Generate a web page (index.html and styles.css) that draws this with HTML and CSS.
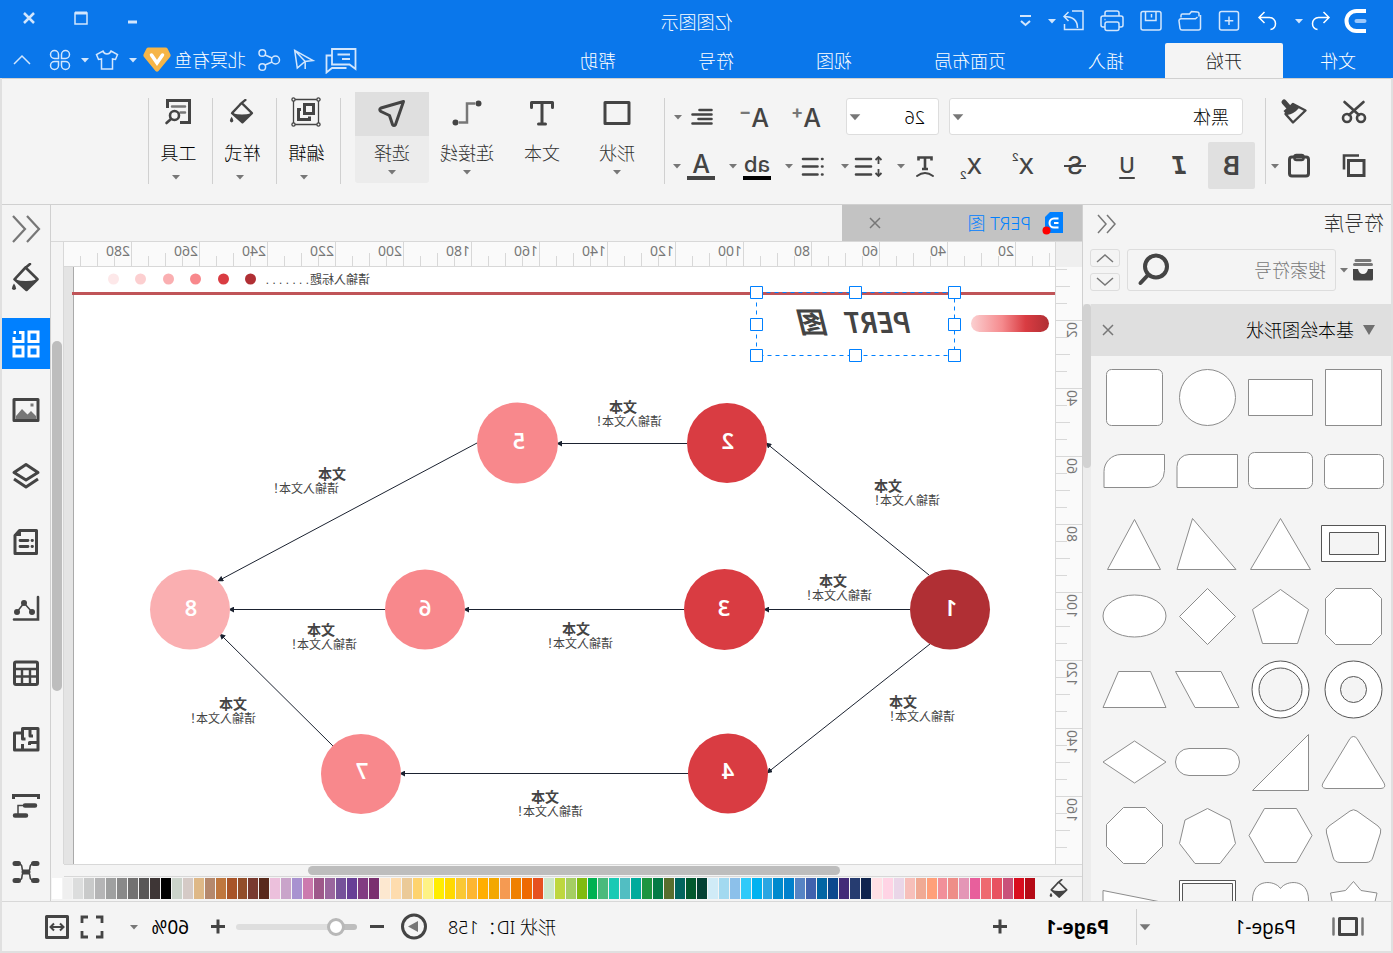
FILE: index.html
```html
<!DOCTYPE html>
<html lang="zh-CN">
<head>
<meta charset="utf-8">
<title>亿图图示</title>
<link rel="stylesheet" href="styles.css">
</head>
<body>
<svg class="defs" aria-hidden="true">
  <symbol id="caret" viewBox="0 0 12 12"><path d="M2 4h8L6 8.500z" fill="currentColor"/></symbol>
  <symbol id="bucket" viewBox="0 0 30 30"><path d="M11 1l6 5M15.500 4.500L3.500 16.300 14.500 27 26.500 16.300z" fill="none" stroke="currentColor" stroke-width="2.600" stroke-linejoin="round" stroke-linecap="round"/><path d="M4 16.500q11 3 22 0L14.500 27z" fill="currentColor"/><path d="M27 20.500q4 6 0 6.500-4-.5 0-6.500z" fill="currentColor"/></symbol>
  <symbol id="arrowL" viewBox="0 0 24 24"><path d="M8.500 3L3 8.500 8.500 14M3 8.500h10.500a6 6 0 0 1 6 6c0 3.500-2 5.500-5 6" fill="none" stroke="currentColor" stroke-width="1.500"/></symbol>
  <symbol id="x" viewBox="0 0 16 16"><path d="M3 3l10 10M13 3L3 13" fill="none" stroke="currentColor" stroke-width="1.500"/></symbol>
  <marker id="tip" viewBox="0 0 8 8" refX="7" refY="4" markerWidth="6" markerHeight="6" markerUnits="userSpaceOnUse" orient="auto"><path d="M0 0l8 4-8 4z" fill="#1b2230"/></marker>
</svg>

<div class="app">
  <header class="top">
    <div class="title-row">
      <div class="quick">
        <svg class="logo" viewBox="0 0 28 28"><path d="M3 4h9.500a10 10 0 0 1 0 20H3" fill="none" stroke="#fff" stroke-width="4"/><path d="M4.500 14h8" stroke="#9cc8fb" stroke-width="4" stroke-linecap="round"/></svg>
        <button class="hbtn with-caret" aria-label="撤销"><svg class="i24"><use href="#arrowL"/></svg><svg class="caret"><use href="#caret"/></svg></button>
        <button class="hbtn" aria-label="重做"><svg class="i24 flip"><use href="#arrowL"/></svg></button>
        <button class="hbtn" aria-label="新建"><svg class="i24" viewBox="0 0 24 24"><rect x="2.500" y="2.500" width="19" height="18.500" rx="2"/><path d="M12 7.500v8.500M7.700 11.800h8.600"/></svg></button>
        <button class="hbtn" aria-label="打开"><svg class="i24" viewBox="0 0 24 24"><path d="M3 7.500V4.500a1.500 1.500 0 0 1 1.500-1.500l6-.5 2 2.500h7a1.500 1.500 0 0 1 1.500 1.500v2"/><path d="M1.500 6v13a2 2 0 0 0 2 2H20a2 2 0 0 0 2-1.700l1-7.300a2 2 0 0 0-2-2.300H6.500L4.500 8"/></svg></button>
        <button class="hbtn" aria-label="保存"><svg class="i24" viewBox="0 0 24 24"><rect x="2" y="2.500" width="20" height="18.500" rx="2"/><path d="M7 2.500v9h10.500v-9M11.500 5v3.500"/></svg></button>
        <button class="hbtn" aria-label="打印"><svg class="i24" viewBox="0 0 24 24"><path d="M5 7V4a2 2 0 0 1 2-2h10a2 2 0 0 1 2 2v3M5 18H3a2 2 0 0 1-2-2V9a2 2 0 0 1 2-2h18a2 2 0 0 1 2 2v7a2 2 0 0 1-2 2h-2M18.500 10.500h1"/><rect x="5" y="13" width="14" height="8.500" rx="2"/></svg></button>
        <button class="hbtn with-caret" aria-label="导出"><svg class="i24" viewBox="0 0 24 24"><path d="M13 2H2v18.500h18.500V15M7.500 19C7.500 12 12 7.500 21 7.500M16.500 3L21 7.500 16.500 12"/></svg><svg class="caret"><use href="#caret"/></svg></button>
        <button class="hbtn more" aria-label="更多"><svg class="i24" viewBox="0 0 24 24"><path d="M7 7h11M8 12l4.500 4 4.500-4" stroke-width="2"/></svg></button>
      </div>
      <h1>亿图图示</h1>
      <div class="winctl">
        <button aria-label="最小化"><svg class="i16" viewBox="0 0 16 16"><path d="M4 12h9" stroke-width="3"/></svg></button>
        <button aria-label="最大化"><svg class="i16" viewBox="0 0 16 16"><path d="M2 3h12v11H2z" stroke-width="1.500"/><path d="M2 3h12" stroke-width="3"/></svg></button>
        <button aria-label="关闭"><svg class="i16" viewBox="0 0 16 16"><path d="M3 3l10 10M13 3L3 13" stroke-width="2.500"/></svg></button>
      </div>
    </div>
    <div class="menu-row">
      <nav class="menu">
        <button class="file">文件</button><button class="on">开始</button><button>插入</button><button>页面布局</button><button>视图</button><button>符号</button><button>帮助</button>
      </nav>
      <div class="account">
        <button class="chat" aria-label="评论"><svg class="i32" viewBox="0 0 32 28"><path d="M1.500 23V3H25v15.500H7.500zM7 8.500h12.500M7 13h8M25 9.500h5.500v17L25 22H10.500" stroke-width="1.800"/></svg></button>
        <button aria-label="发送"><svg class="i24" viewBox="0 0 24 24"><path d="M21.300 2.300L3 12.500l8 1 7.700 6.500zM21.300 2.300L10.800 13.500V21"/></svg></button>
        <button aria-label="分享"><svg class="i24" viewBox="0 0 24 24"><circle cx="18.700" cy="5" r="3.300"/><circle cx="18.700" cy="19" r="3.300"/><circle cx="5.500" cy="12" r="4"/><path d="M9 10l7-3M9 14l7 3"/></svg></button>
        <button class="user">北冥有鱼</button>
        <button class="with-caret vip" aria-label="会员"><svg class="i28" viewBox="0 0 28 28"><path d="M5.500 1.500h17q1.500 0 2 1l3 6q.5 1.500-.5 2.500L15.500 25q-1.500 1.500-3 0L1 11Q0 10 .5 8.500l3-6q.5-1 2-1z" fill="#f6b548" stroke="none"/><path d="M8.500 9l5.500 8 5.500-8" stroke="#fff" stroke-width="3.500" stroke-linecap="round"/></svg><svg class="caret"><use href="#caret"/></svg></button>
        <button class="with-caret skin" aria-label="皮肤"><svg class="i24" viewBox="0 0 24 24"><path d="M8 3L1.500 6.500l2 5L6.500 11v10h11V11l3 .5 2-5L16 3q-1 3-4 3T8 3z"/></svg><svg class="caret"><use href="#caret"/></svg></button>
        <button aria-label="应用"><svg class="i24" viewBox="0 0 24 24"><path d="M10.500 10.500H6.500a4 4 0 1 1 4-4zM13.500 10.500v-4a4 4 0 1 1 4 4zM10.500 13.500v4a4 4 0 1 1-4-4zM13.500 13.500h4a4 4 0 1 1-4 4z"/></svg></button>
        <button class="fold" aria-label="收起"><svg class="i24" viewBox="0 0 24 24"><path d="M4 16l8-8 8 8"/></svg></button>
      </div>
    </div>
  </header>

  <section class="ribbon">
    <div class="clip">
      <div class="r1">
        <button class="ib" aria-label="剪切"><svg viewBox="0 0 30 30"><circle cx="8" cy="20" r="4"/><circle cx="22" cy="20" r="4"/><path d="M5.500 4L20 17M24.500 4L10 17" stroke-linecap="round"/></svg></button>
        <button class="ib" aria-label="格式刷"><svg viewBox="0 0 30 30"><path d="M25 4l-4 4.500" stroke-width="5" stroke-linecap="round"/><path d="M16 6L3.500 12.500 16 24.500 23.500 16z" stroke-linejoin="round" stroke-width="2.400"/><path d="M16.500 5l9 8-3.500 4q-7-1-12-7z" fill="#444" stroke="none"/></svg></button>
      </div>
      <div class="r2">
        <button class="ib" aria-label="复制"><svg viewBox="0 0 30 30"><path d="M5 9.500h15.500v15H5z" stroke-width="3"/><path d="M25 18.500V4.500H10"/></svg></button>
        <button class="ib" aria-label="粘贴"><svg viewBox="0 0 30 30"><rect x="5.500" y="6" width="19" height="19" rx="2.500" stroke-width="3"/><rect x="10.500" y="4" width="9" height="5" rx="2"/></svg></button>
        <svg class="caret"><use href="#caret"/></svg>
      </div>
    </div>
    <div class="rule"></div>
    <div class="font">
      <div class="r1">
        <label class="sel wide"><select aria-label="字体"><option>黑体</option></select><svg class="caret"><use href="#caret"/></svg></label>
        <label class="sel"><select aria-label="字号"><option>26</option></select><svg class="caret"><use href="#caret"/></svg></label>
        <button class="ib tx size">A<sup>+</sup></button>
        <button class="ib tx size">A<sup>−</sup></button>
        <span class="split"><button class="ib" aria-label="对齐"><svg viewBox="0 0 30 30"><path d="M5.500 8h12M5.500 12.500h19M5.500 17h13M5.500 21.500h19" stroke-linecap="round"/></svg></button><svg class="caret"><use href="#caret"/></svg></span>
      </div>
      <div class="r2">
        <button class="ib tx bold">B</button>
        <button class="ib tx ital">I</button>
        <button class="ib tx und">U</button>
        <button class="ib tx strike">S</button>
        <button class="ib tx xx">X<sup>2</sup></button>
        <button class="ib tx xx">X<sub>2</sub></button>
        <span class="split tsplit"><button class="ib" aria-label="文字效果"><svg viewBox="0 0 30 30"><path d="M8.500 9.500V6.500h13v3M15 6.500V18M12 18h6"/><path d="M7 25q8-6 16 0" stroke-linecap="round" stroke-width="2"/></svg></button><svg class="caret"><use href="#caret"/></svg></span>
        <span class="split"><button class="ib" aria-label="行距"><svg viewBox="0 0 30 30"><path d="M13 8h15M13 15.500h15M13 23.500h15" stroke-linecap="round"/><path d="M5.500 13V6.500M2.500 9l3-3 3 3M5.500 18v6.500M2.500 22l3 3 3-3" stroke-width="1.800"/></svg></button><svg class="caret"><use href="#caret"/></svg></span>
        <span class="split"><button class="ib" aria-label="列表"><svg viewBox="0 0 30 30"><path d="M10.500 8H25M10.500 15.500H25M10.500 23.500H25M5.500 8h.5M5.500 15.500h.5M5.500 23.500h.5" stroke-linecap="round"/></svg></button><svg class="caret"><use href="#caret"/></svg></span>
        <span class="split"><button class="ib tx ab">ab</button><svg class="caret"><use href="#caret"/></svg></span>
        <span class="split"><button class="ib tx acol">A</button><svg class="caret"><use href="#caret"/></svg></span>
      </div>
    </div>
    <div class="rule"></div>
    <div class="bigs">
      <button class="big"><span class="pic"><svg viewBox="0 0 30 30"><path d="M3 3.500h24v21H3z" stroke-width="3" stroke-linejoin="round"/></svg></span><span class="lab">形状</span><svg class="caret"><use href="#caret"/></svg></button>
      <button class="big"><span class="pic"><svg viewBox="0 0 30 30"><path d="M4.500 8.500V3.500h21v5M15 3.500v21M11.500 25h7" stroke-width="3" stroke-linecap="round" stroke-linejoin="round"/></svg></span><span class="lab">文本</span></button>
      <button class="big"><span class="pic"><svg viewBox="0 0 30 30"><path d="M7 4.500h8v19h8" stroke="#777" stroke-width="2.500"/><circle cx="3.500" cy="4.500" r="3" fill="#444" stroke="none"/><circle cx="26.500" cy="23.500" r="3" fill="#444" stroke="none"/></svg></span><span class="lab">连接线</span><svg class="caret"><use href="#caret"/></svg></button>
      <button class="big on"><span class="pic"><svg viewBox="0 0 30 30"><path d="M3.500 2.500L26 9q2.500 1.500 0 3.500l-8.500 4-3 9q-1.500 2-3 0z" stroke-width="3" stroke-linejoin="round"/></svg></span><span class="lab">选择</span><svg class="caret"><use href="#caret"/></svg></button>
    </div>
    <div class="rule"></div>
    <button class="grp"><span class="pic"><svg viewBox="0 0 30 30"><path d="M2.500 2.500h25v25h-25z" stroke-width="1.300"/><g fill="#f4f4f4" stroke-width="1.300"><circle cx="2.500" cy="2.500" r="1.600"/><circle cx="27.500" cy="2.500" r="1.600"/><circle cx="2.500" cy="27.500" r="1.600"/><circle cx="27.500" cy="27.500" r="1.600"/></g><path d="M7.500 7.500h9v9h-9zM20 12.500h2.500v10H11.500V19.500" stroke-width="3"/></svg></span><span class="lab">编辑</span><svg class="caret"><use href="#caret"/></svg></button>
    <div class="rule"></div>
    <button class="grp"><span class="pic small"><svg><use href="#bucket"/></svg></span><span class="lab">样式</span><svg class="caret"><use href="#caret"/></svg></button>
    <div class="rule"></div>
    <button class="grp"><span class="pic"><svg viewBox="0 0 30 30"><path d="M25.500 11V3.500H3.500v22H13" stroke-width="3"/><path d="M8 9.500h13M8 15.500h4.500" stroke="#777" stroke-linecap="round" stroke-width="2.500"/><circle cx="18.500" cy="18.500" r="4.500"/><path d="M22 22l4.500 4" stroke-linecap="round"/></svg></span><span class="lab">工具</span><svg class="caret"><use href="#caret"/></svg></button>
    <div class="rule"></div>
  </section>

  <main class="work">
    <aside class="lib">
      <div class="lib-head"><h2>符号库</h2><button aria-label="收起符号库"><svg class="i24" viewBox="0 0 24 24"><path d="M12 3l-8 9 8 9M21 3l-8 9 8 9"/></svg></button></div>
      <div class="search">
        <button class="libbtn" aria-label="符号库菜单"><svg class="i24" viewBox="0 0 24 24"><path d="M5 2.500h14M3.500 6.500h17" stroke="#777" stroke-width="3" stroke-linecap="round"/><path d="M2 11h5q1 5 5 5t5-5h5v10a1.500 1.500 0 0 1-1.500 1.500h-17A1.500 1.500 0 0 1 2 21z" fill="#444" stroke="none"/></svg><svg class="caret"><use href="#caret"/></svg></button>
        <label class="sbox"><input type="text" placeholder="搜索符号" aria-label="搜索符号"><svg viewBox="0 0 36 36"><circle cx="16" cy="14.500" r="11" /><path d="M24 23l7.500 8" stroke-linecap="round"/></svg></label>
        <div class="updown"><button aria-label="上一个"><svg viewBox="0 0 20 12"><path d="M2 10l8-7 8 7"/></svg></button><button aria-label="下一个"><svg viewBox="0 0 20 12"><path d="M2 2l8 7 8-7"/></svg></button></div>
      </div>
      <div class="lib-body">
        <div class="lib-list">
          <div class="cat"><svg viewBox="0 0 12 10"><path d="M0 0h12L6 10z" fill="#707070"/></svg><span>基本绘图形状</span><button aria-label="关闭分类"><svg class="i16"><use href="#x"/></svg></button></div>
          <div class="shapes">
            <svg viewBox="0 0 73 73"><path d="M8.500 8.500h56v56h-56z"/></svg>
            <svg viewBox="0 0 73 73"><path d="M4.500 18.500h64v36h-64z"/></svg>
            <svg viewBox="0 0 73 73"><circle cx="36.500" cy="36.500" r="28"/></svg>
            <svg viewBox="0 0 73 73"><rect x="8.500" y="8.500" width="56" height="56" rx="5"/></svg>
            <svg viewBox="0 0 73 73"><rect x="6.500" y="20.500" width="59" height="34" rx="5"/></svg>
            <svg viewBox="0 0 73 73"><rect x="4.500" y="18.500" width="64" height="36" rx="6"/></svg>
            <svg viewBox="0 0 73 73"><path d="M6.500 20.500H55a12 12 0 0 1 12 12V53.500H6.500z"/></svg>
            <svg viewBox="0 0 73 73"><path d="M6.500 20.500H50a17 17 0 0 1 17 17V53.500H23a17 17 0 0 1-16.500-17z"/></svg>
            <svg viewBox="0 0 73 73" class="dk"><path d="M4.500 18.500h64v36h-64z"/><path class="in" d="M11.500 25.500h49v22h-49z"/></svg>
            <svg viewBox="0 0 73 73"><path d="M36.500 11.500l30 51h-60z"/></svg>
            <svg viewBox="0 0 73 73"><path d="M51.500 11.500L67 62.500H8z"/></svg>
            <svg viewBox="0 0 73 73"><path d="M36.500 12.500L63.500 62.500H10.500z"/></svg>
            <svg viewBox="0 0 73 73"><path d="M18.500 8.500h36l10 10v36l-10 10h-36l-10-10v-36z"/></svg>
            <svg viewBox="0 0 73 73"><path d="M36.500 9.500l28 20-10 34h-35l-11-34z"/></svg>
            <svg viewBox="0 0 73 73"><path d="M36.500 8.500l28 28-28 28-28-28z"/></svg>
            <svg viewBox="0 0 73 73"><ellipse cx="36.500" cy="36" rx="31.500" ry="21"/></svg>
            <svg viewBox="0 0 73 73" class="dk"><circle cx="36.500" cy="36.500" r="28.500"/><circle class="in" cx="36.500" cy="36.500" r="13"/></svg>
            <svg viewBox="0 0 73 73" class="dk"><circle cx="36.500" cy="36.500" r="28.500"/><circle class="in" cx="36.500" cy="36.500" r="21.500"/></svg>
            <svg viewBox="0 0 73 73"><path d="M23 18.500h45.500l-19.500 36H5z"/></svg>
            <svg viewBox="0 0 73 73"><path d="M20.500 18.500h32l15.500 36H5z"/></svg>
            <svg viewBox="0 0 73 73"><path d="M33 12.500q3.500-4 7 0L67 57q2.500 5-3 5.500H9q-5.500-.5-3-5.500z"/></svg>
            <svg viewBox="0 0 73 73"><path d="M8.500 8.500v56h56z"/></svg>
            <svg viewBox="0 0 73 73"><rect x="4.500" y="22.500" width="64" height="27" rx="13.500"/></svg>
            <svg viewBox="0 0 73 73"><path d="M36.500 15l31.500 21-31.500 21L5 36z"/></svg>
            <svg viewBox="0 0 73 73"><path d="M33 12q3.500-2.500 7 0L61 27q4 3 2.500 7L57 58q-1.500 5.500-7 5.500H24q-5.500 0-7-5.500L9.500 34Q8 30 12 27z"/></svg>
            <svg viewBox="0 0 73 73"><path d="M20.500 9.500h32l15.500 27-15.500 27h-32L5 36.500z"/></svg>
            <svg viewBox="0 0 73 73"><path d="M36.500 9.500L59 21l5.500 23.500-15.500 20H24l-15.500-20L14 21z"/></svg>
            <svg viewBox="0 0 73 73"><path d="M25.500 8.500h22l17 17v22l-17 17h-22l-17-17v-22z"/></svg>
            <svg viewBox="0 0 73 73"><path d="M36.500 9.500l8 9 15 2.500-2.500 13 4 14-16 4-8.500 12-8.500-12-16-4 4-14-3-13 16-2.500z"/></svg>
            <svg viewBox="0 0 73 73"><path d="M36.500 16.500C42 8 64.500 6 64.500 28c0 16-20 27-28 36-8-9-28-20-28-36 0-22 22.500-20 28-11.500z"/></svg>
            <svg viewBox="0 0 73 73" class="dk"><path d="M8.500 8.500h56v56h-56z"/><path class="in" d="M11.500 11.500h50v50h-50z"/></svg>
            <svg viewBox="0 0 73 73"><path d="M68 18.500v36L5 44V31z"/></svg>
          </div>
        </div>
        <div class="vbar lite"><i></i></div>
      </div>
    </aside>

    <section class="center">
      <div class="tabs"><div class="tab"><svg class="i24" viewBox="0 0 24 24"><path d="M3 1h13l5 5v16H3z" fill="#0080ff"/><path d="M7.500 7.500H12a4.500 4.500 0 0 1 0 9H7.500M7.500 12H12" fill="none" stroke="#fff" stroke-width="2"/><circle cx="19.500" cy="19.500" r="4" fill="#f00"/></svg><a href="#pert">PERT 图</a><button aria-label="关闭"><svg class="i16"><use href="#x"/></svg></button></div></div>
      <div class="corner"></div>
      <svg class="hruler">
        <defs><pattern id="ht" x="39" y="0" width="68" height="26" patternUnits="userSpaceOnUse"><path d="M.5 0v26M17.500 14v12M34.500 11v15M51.500 14v12" stroke="#d8d8d8"/></pattern></defs>
        <rect width="100%" height="26" fill="url(#ht)"/>
        <g><text x="41" y="14">20</text><text x="109" y="14">40</text><text x="177" y="14">60</text><text x="245" y="14">80</text><text x="313" y="14">100</text><text x="381" y="14">120</text><text x="449" y="14">140</text><text x="517" y="14">160</text><text x="585" y="14">180</text><text x="653" y="14">200</text><text x="721" y="14">220</text><text x="789" y="14">240</text><text x="857" y="14">260</text><text x="925" y="14">280</text></g>
      </svg>
      <svg class="vruler">
        <defs><pattern id="vt" x="0" y="53" width="26" height="68" patternUnits="userSpaceOnUse"><path d="M0 .5h26M15 17.500h11M12 34.500h14M15 51.500h11" stroke="#d8d8d8"/></pattern></defs>
        <rect width="26" height="100%" fill="url(#vt)"/>
        <g text-anchor="end"><text transform="translate(15 55) rotate(-90)">20</text><text transform="translate(15 123) rotate(-90)">40</text><text transform="translate(15 191) rotate(-90)">60</text><text transform="translate(15 259) rotate(-90)">80</text><text transform="translate(15 327) rotate(-90)">100</text><text transform="translate(15 395) rotate(-90)">120</text><text transform="translate(15 463) rotate(-90)">140</text><text transform="translate(15 531) rotate(-90)">160</text></g>
      </svg>
      <div class="canvas" id="pert">
        <svg class="page" width="991" height="597" viewBox="338 267 991 597">
          <defs><linearGradient id="pill"><stop offset="0" stop-color="#b02f34"/><stop offset=".3" stop-color="#d93c42"/><stop offset=".6" stop-color="#f58a8d"/><stop offset="1" stop-color="#fbd0d1"/></linearGradient></defs>
          <path d="M337 267h982v597H337z" fill="#fff"/><path d="M1319.500 267v597" stroke="#aaa"/>
          <path d="M337 293.500h984" stroke="#c05458" stroke-width="3"/>
          <text x="1023" y="284" class="s">请输入标题</text><text x="1084" y="284" class="s">. . . . . . .</text>
          <circle cx="1142.500" cy="279" r="5.500" fill="#b02f34"/><circle cx="1169.500" cy="279" r="5.500" fill="#d93c42"/><circle cx="1197.500" cy="279" r="5.500" fill="#f8888c"/><circle cx="1224.500" cy="279" r="5.500" fill="#faafb1"/><circle cx="1252.500" cy="279" r="5.500" fill="#fccfd0"/><circle cx="1279.500" cy="279" r="5.500" fill="#fde8e9"/>
          <rect x="344" y="315" width="78" height="17" rx="8.500" fill="url(#pill)"/>
          <g stroke="#1b2230" fill="none"><g marker-end="url(#tip)"><path d="M464 575L627 443"/><path d="M706 443.500H836"/><path d="M916 443L1175 581"/><path d="M483 609.500H629"/><path d="M709 609.500H929"/><path d="M1008 609.500H1164"/><path d="M463 644L626 773"/><path d="M705 773.500H993"/><path d="M1060 746L1173 634"/></g></g>
          <circle cx="443" cy="609.500" r="40" fill="#b02f34"/><circle cx="666" cy="443" r="40" fill="#d93c42"/><circle cx="668.500" cy="609.500" r="40.500" fill="#d93c42"/><circle cx="665" cy="773.500" r="40" fill="#d93c42"/><circle cx="875.500" cy="443" r="40.500" fill="#f8888c"/><circle cx="968" cy="609.500" r="40" fill="#f8888c"/><circle cx="1032" cy="774" r="40" fill="#f8888c"/><circle cx="1203" cy="609.500" r="40" fill="#faafb1"/>
          <g class="n"><text x="442" y="616">1</text><text x="665" y="449">2</text><text x="669" y="616">3</text><text x="665" y="779">4</text><text x="874" y="449">5</text><text x="968" y="616">6</text><text x="1031" y="779">7</text><text x="1202" y="616">8</text></g>
          <g class="b"><text x="756" y="412">文本</text><text x="491" y="491">文本</text><text x="1047" y="479">文本</text><text x="546" y="586">文本</text><text x="803" y="634">文本</text><text x="1058" y="635">文本</text><text x="1146" y="709">文本</text><text x="476" y="707">文本</text><text x="834" y="802">文本</text></g>
          <g class="s"><text x="731" y="426">请输入文本！</text><text x="453" y="505">请输入文本！</text><text x="1054" y="493">请输入文本！</text><text x="521" y="600">请输入文本！</text><text x="780" y="648">请输入文本！</text><text x="1036" y="649">请输入文本！</text><text x="1137" y="723">请输入文本！</text><text x="438" y="721">请输入文本！</text><text x="810" y="816">请输入文本！</text></g>
          <text class="t" x="482" y="333">PERT</text><text class="t" x="564" y="333">图</text>
          <path d="M438.500 292.500H636.500V355.500H438.500z" fill="none" stroke="#0080ff" stroke-dasharray="4 4"/>
          <g fill="#fff" stroke="#0080ff"><path d="M432.500 286.500h12v12h-12zM531.500 286.500h12v12h-12zM630.500 286.500h12v12h-12zM432.500 318.500h12v12h-12zM630.500 318.500h12v12h-12zM432.500 349.500h12v12h-12zM531.500 349.500h12v12h-12zM630.500 349.500h12v12h-12z"/></g>
        </svg>
      </div>
      <div class="vbar"><i></i></div>
      <div class="hbar"><i></i></div>
      <div class="palette"><button aria-label="填充"><svg class="i20"><use href="#bucket"/></svg></button>
        <div class="sw"><i style="background:#b50a16"></i><i style="background:#d90d1e"></i><i style="background:#c9517a"></i><i style="background:#e85260"></i><i style="background:#ee6a70"></i><i style="background:#e85f9c"></i><i style="background:#e496b6"></i><i style="background:#ee8e88"></i><i style="background:#f1909a"></i><i style="background:#ffa07a"></i><i style="background:#f0aa94"></i><i style="background:#f7bfba"></i><i style="background:#ead6e8"></i><i style="background:#ffd4e5"></i><i style="background:#ffe0e5"></i><i style="background:#10244e"></i><i style="background:#263c70"></i><i style="background:#432b78"></i><i style="background:#0b488e"></i><i style="background:#0266a4"></i><i style="background:#4162ae"></i><i style="background:#5784c4"></i><i style="background:#0080cc"></i><i style="background:#008acd"></i><i style="background:#2ba6e2"></i><i style="background:#00b2f0"></i><i style="background:#30caf9"></i><i style="background:#8cc0ea"></i><i style="background:#a2d9f0"></i><i style="background:#d0ebf7"></i><i style="background:#034134"></i><i style="background:#02592e"></i><i style="background:#02655e"></i><i style="background:#586e2e"></i><i style="background:#047a46"></i><i style="background:#1e9540"></i><i style="background:#00ab9c"></i><i style="background:#52bec2"></i><i style="background:#1acab4"></i><i style="background:#4aba7c"></i><i style="background:#00b152"></i><i style="background:#80bb10"></i><i style="background:#a5ce62"></i><i style="background:#bed73e"></i><i style="background:#cde7ca"></i><i style="background:#e65020"></i><i style="background:#ee6a02"></i><i style="background:#ef8000"></i><i style="background:#f59a52"></i><i style="background:#f3a800"></i><i style="background:#ffae00"></i><i style="background:#fdb632"></i><i style="background:#fac834"></i><i style="background:#ffd900"></i><i style="background:#ffed00"></i><i style="background:#fef285"></i><i style="background:#fed36e"></i><i style="background:#ebca98"></i><i style="background:#fedcae"></i><i style="background:#fde8d0"></i><i style="background:#7a3070"></i><i style="background:#823c82"></i><i style="background:#683f96"></i><i style="background:#76529a"></i><i style="background:#9a669e"></i><i style="background:#9e588a"></i><i style="background:#cc7aae"></i><i style="background:#a892d0"></i><i style="background:#c9a4ca"></i><i style="background:#ecc0dc"></i><i style="background:#592a1c"></i><i style="background:#783a30"></i><i style="background:#924e2a"></i><i style="background:#a85428"></i><i style="background:#bf773e"></i><i style="background:#b5886c"></i><i style="background:#deb887"></i><i style="background:#d5cac6"></i><i style="background:#cbd3ca"></i><i style="background:#000"></i><i style="background:#3e3636"></i><i style="background:#595757"></i><i style="background:#727171"></i><i style="background:#898989"></i><i style="background:#9fa0a0"></i><i style="background:#b5b5b6"></i><i style="background:#c9caca"></i><i style="background:#dcdddd"></i><i style="background:#efefef"></i><i style="background:#fff"></i></div>
      </div>
    </section>

    <aside class="side">
      <button aria-label="展开"><svg viewBox="0 0 30 30"><path d="M14 2L2 15l12 13M28 2L16 15l12 13" stroke="#777" stroke-width="2.200"/></svg></button>
      <button aria-label="填充"><svg><use href="#bucket"/></svg></button>
      <button class="on" aria-label="符号"><svg viewBox="0 0 30 30"><g stroke="#fff" stroke-width="3"><path d="M3 3h9v9.500H3zM3 18h9v9H3zM18 18h9v9h-9zM22 3.500h-4v9h9V8M25 3.500h2.500"/></g></svg></button>
      <button aria-label="图片"><svg viewBox="0 0 30 30"><path d="M3 4.500h24v21H3z" stroke-width="3" stroke-linejoin="round"/><path d="M5 24v-3l5-5 3.500 3.500L19 14l6 7v3z" fill="#777" stroke="none"/><path d="M7.500 8.500h3v3h-3z" fill="#777" stroke="none"/></svg></button>
      <button aria-label="图层"><svg viewBox="0 0 30 30"><path d="M15 3.500L27 11.500l-12 7.500L3 11.500zM3 18l12 8 12-8" stroke-width="3" stroke-linejoin="round"/></svg></button>
      <button aria-label="文档"><svg viewBox="0 0 30 30"><path d="M4.500 3.500h17l4.500 5v18H4.500z" stroke-width="3" stroke-linejoin="round"/><path d="M20 3v6h6z" fill="#444" stroke="none"/><path d="M13 13.500h8M13 19.500h8M8.500 13.500h.5M8.500 19.500h.5" stroke-width="2.800" stroke-linecap="round"/></svg></button>
      <button aria-label="图表"><svg viewBox="0 0 30 30"><path d="M3 4v22.500h24" stroke-width="2.600" stroke-linecap="round"/><path d="M9 19l8-9 7 9" stroke-width="1.500"/><g fill="#444" stroke="none"><circle cx="9" cy="19" r="3"/><circle cx="17" cy="10" r="3"/><circle cx="24" cy="19" r="3"/></g></svg></button>
      <button aria-label="表格"><svg viewBox="0 0 30 30"><rect x="3.500" y="3" width="23" height="22.500" rx="1.500" stroke-width="3"/><path d="M3 10h24M3 17.500h24M11 10v15M19 10v15"/></svg></button>
      <button aria-label="平面图"><svg viewBox="0 0 30 30"><path d="M3 3.500h15.500V8H26.500v17H3zM11 3.500V11H8M3 17.500h8.500V20M18.500 25v-6M18.500 8v6h-3" stroke-width="3" stroke-linejoin="round" transform="matrix(-1 0 0 1 29.500 0) matrix(-1 0 0 1 29.500 0)"/></svg></button>
      <button aria-label="甘特图"><svg viewBox="0 0 30 30"><path d="M2.500 8V4.500h25V8" stroke-width="3"/><path d="M6 14.500h10M15 24.500h11" stroke-width="4.500" stroke-linecap="round"/><path d="M17 14.500h6V23" stroke-width="1.500"/></svg></button>
      <button aria-label="思维导图"><svg viewBox="0 0 30 30"><path d="M6 6.500q5 0 5 4t4 4.500q4-.5 4-4.500t5-4M6 23.500q5 0 5-4t4-4.500q4 .5 4 4.500t5 4" stroke-width="1.600"/><path d="M4 6.500h3.500M22.500 6.500H26M4 23.500h3.500M22.500 23.500H26M13 15h4" stroke-width="5" stroke-linecap="round"/></svg></button>
    </aside>
  </main>

  <footer class="status">
    <button class="st" aria-label="视图"><svg class="i32b" viewBox="0 0 32 24"><path d="M7.500 3.500h17v16h-17z" stroke-width="3" stroke-linejoin="round"/><path d="M1.500 3.500v16M30.500 3.500v16" stroke="#777" stroke-width="2.500" stroke-linecap="round"/></svg></button>
    <label class="pagesel"><select aria-label="页面"><option>Page-1</option></select><svg class="caret"><use href="#caret"/></svg></label>
    <div class="rule short"></div>
    <button class="pg">Page-1</button>
    <button class="st add" aria-label="添加页面"><svg class="i24" viewBox="0 0 24 24"><path d="M12 4.500v14M5 11.500h14"/></svg></button>
    <div class="rt">
      <span class="sid">形状 ID：158</span>
      <button class="st" aria-label="播放"><svg class="i28" viewBox="0 0 28 28"><circle cx="14" cy="13.500" r="11.500" stroke-width="3"/><path d="M10 8l10 5.500-10 5.500z" fill="#777" stroke="none"/></svg></button>
      <button class="st minus" aria-label="缩小"><svg class="i24" viewBox="0 0 24 24"><path d="M5 11.500h14"/></svg></button>
      <input type="range" min="0" max="100" value="12" aria-label="缩放">
      <button class="st" aria-label="放大"><svg class="i24" viewBox="0 0 24 24"><path d="M12 4.500v14M5 11.500h14"/></svg></button>
      <label class="zoomsel"><select aria-label="缩放比例"><option>60%</option></select><svg class="caret"><use href="#caret"/></svg></label>
      <button class="st full" aria-label="全屏"><svg class="i28" viewBox="0 0 28 28"><path d="M10 4H4v6M18 4h6v6M10 24H4v-6M18 24h6v-6" stroke-width="2.800"/></svg></button>
      <button class="st" aria-label="适应宽度"><svg class="i28" viewBox="0 0 28 28"><path d="M3.500 3.500h21v21h-21z" stroke-width="3" stroke-linejoin="round"/><path d="M8 14h12M11 10.500L7.500 14l3.500 3.500M17 10.500l3.500 3.500-3.500 3.500" stroke-width="2"/></svg></button>
    </div>
  </footer>
</div>
</body>
</html>
```
FILE: styles.css
```css
* { box-sizing: border-box; }

html, body { height: 100%; }

body {
  margin: 0;
  overflow: hidden;
  font: 300 18px/24px "Noto Sans", "Noto Sans CJK SC", sans-serif;
  color: #111;
  background: #e0e0e0;
}

.defs { position: absolute; width: 0; height: 0; }

button, input, select {
  font: inherit;
  color: inherit;
  border: 0;
  padding: 0;
  margin: 0;
  background: none;
  display: block;
}

button { display: flex; align-items: center; justify-content: center; flex: none; }
select { appearance: none; outline: 0; }
h1, h2 { margin: 0; font: inherit; }
svg { display: block; fill: none; flex: none; }

.i16 { width: 16px; height: 16px; }
.i20 { width: 20px; height: 20px; }
.i24 { width: 24px; height: 24px; }
.i28 { width: 28px; height: 28px; }
.i32 { width: 32px; height: 28px; }
.i32b { width: 32px; height: 24px; }
.caret { width: 12px; height: 12px; color: #777; }
.flip { transform: scaleX(-1); }

/* The whole window is displayed as its mirror image. */
.app {
  height: 100vh;
  display: grid;
  grid-template-rows: 78px 127px 1fr 50px;
  transform: scaleX(-1);
  border-bottom: 2px solid #e0e0e0;
}

/* Title bar and menu */
.top { background: #0a77eb; color: #fff; display: grid; grid-template-rows: 43px 35px; }
.top svg { stroke: #d2e6fd; stroke-width: 1.5; }
.top svg.caret { color: #d2e6fd; stroke: none; }
.top .logo { stroke: none; width: 28px; height: 28px; margin-right: -6px; }
.title-row { display: grid; grid-template-columns: 1fr auto 1fr; align-items: center; padding-bottom: 1px; }
.quick { display: flex; gap: 15px; padding-left: 24px; align-items: center; }
.with-caret { gap: 3px; }
.with-caret + .hbtn { margin-left: -2px; }
.quick .more { margin-left: -7px; }
.title-row h1 { padding-top: 1px; }
.winctl { display: flex; justify-content: flex-end; gap: 36px; padding: 0 21px 6px 0; }
.menu-row { display: flex; justify-content: space-between; }
.menu { display: flex; }
.menu button { padding: 1px 41px 0; }
.menu .file { padding: 1px 37px 0; }
.menu .on { background: #f4f4f4; color: #222; border-radius: 2px 2px 0 0; }
.account { display: flex; align-items: center; gap: 11px; padding: 0 10px 1px 0; }
.account .chat { margin-right: -2px; }
.account .user { margin-right: -8px; }
.account .with-caret { gap: 4px; }
.account .vip { margin-right: -3px; }
.account .skin { margin-right: -4px; }
.account .fold { margin-left: 3px; }

/* Ribbon */
.ribbon {
  background: #f4f4f4;
  border: solid #d0d0d0;
  border-width: 1px 0;
  margin: 0 2px;
  padding-top: 19px;
  display: flex;
  align-items: flex-start;
}
.ribbon svg { stroke: #444; stroke-width: 2.6; }
.ribbon svg.caret, .ribbon use { stroke: none; }
.rule { width: 1px; height: 86px; background: #d0d0d0; flex: none; }
.r1, .r2 { display: flex; align-items: center; }
.r1 { height: 37px; margin-bottom: 7px; }
.r2 { height: 47px; }
.ib { width: 30px; height: 30px; color: #444; }
.ib svg { width: 30px; height: 30px; }
.clip { width: 125px; padding-left: 22px; }
.clip .r1 { gap: 30px; align-items: flex-start; }
.clip .r2 { gap: 25px; }
.clip .r2 .caret { margin-left: -22px; }
.font { width: 600px; padding-left: 10px; }
.font .r1 { gap: 22px; padding-left: 12px; }
.font .r2 { gap: 22px; }
.sel {
  display: flex;
  align-items: center;
  width: 93px;
  height: 37px;
  background: #fff;
  border: 1px solid #ddd;
  border-radius: 3px;
}
.sel select { flex: 1; height: 35px; padding-left: 13px; color: #000; min-width: 0; }
.sel .caret { width: 16px; height: 16px; }
.sel.wide { width: 294px; margin-right: -12px; }
.sel + .size { margin-left: 3px; }
.split { display: flex; align-items: center; gap: 3px; margin-right: -11px; }
.tsplit { margin-left: -6px; }
.tx { font: 600 24px/24px Inter, sans-serif; }
.tx sup, .tx sub { font-size: 11px; line-height: 12px; }
.tx.size { font-size: 25px; font-weight: 500; align-items: flex-start; padding-top: 4px; }
.tx.size sup { font-size: 18px; font-weight: 700; color: #777; }
.tx.bold { width: 47px; height: 47px; font-size: 26px; background: #e0e0e0; border-radius: 2px; margin-right: -8px; }
.tx.ital { font: italic bold 24px/24px "DejaVu Sans Mono", monospace; }
.tx.und { font-size: 21px; font-weight: 500; text-decoration: underline; text-underline-offset: 4px; text-decoration-thickness: 2px; }
.tx.strike { font-weight: 500; background: linear-gradient(#444, #444) center / 22px 2px no-repeat; }
.tx.xx { font-size: 22px; font-weight: 500; }
.tx.xx sup { align-self: flex-start; }
.tx.xx sub { align-self: flex-end; }
.tx.ab, .tx.acol { border-bottom: 4px solid #000; height: 28px; width: 28px; margin: 1px 1px 0; font-size: 22px; font-weight: 500; }
.tx.acol { border-color: #444; font-size: 25px; }
.bigs { display: flex; gap: 1px; padding: 0 14px 0 10px; margin-top: -6px; }
.big, .grp { flex-direction: column; justify-content: flex-start; }
.big { width: 74px; height: 91px; border-radius: 3px; color: #333; }
.big .pic { width: 100%; height: 44px; display: flex; align-items: center; justify-content: center; }
.pic svg { width: 30px; height: 30px; }
.pic.small svg { width: 26px; height: 26px; }
.lab { margin: 5px 0 1px; }
.big.on { background: #ececec; }
.big.on .pic { background: #dfdfdf; }
.grp { width: 63px; padding-left: 4px; color: #000; }
.grp .pic { height: 27px; display: flex; align-items: center; }
.grp .lab { margin: 16px 0 6px; }
.grp svg, .pic.small { color: #444; }
.grp svg.caret { color: #777; margin-left: 5px; }

/* Work area */
.work {
  margin: 0 2px;
  background: #f4f4f4;
  display: grid;
  grid-template-columns: 309px minmax(0, 1fr) 49px;
  min-height: 0;
  overflow: hidden;
}

.lib { border-right: 1px solid #d0d0d0; display: flex; flex-direction: column; min-width: 0; min-height: 0; }
.lib svg { stroke: #777; stroke-width: 1.5; }
.lib svg.caret { stroke: none; }
.lib-head { display: flex; justify-content: space-between; align-items: center; height: 36px; padding: 1px 12px 0 7px; font-size: 20px; color: #333; }
.search { display: flex; align-items: center; padding: 8px 7px 0 16px; height: 50px; }
.libbtn { gap: 1px; margin-right: 2px; }
.sbox { flex: 1; min-width: 0; display: flex; align-items: center; height: 42px; border: 1px solid #ddd; border-radius: 3px; padding: 0 8px; }
.sbox input { flex: 1; width: 0; min-width: 0; outline: 0; padding-left: 1px; }
.sbox input::placeholder { color: #777; opacity: 1; }
.sbox svg { width: 36px; height: 36px; stroke: #444; stroke-width: 4; }
.updown { display: grid; gap: 6px; margin-left: 7px; }
.updown button { width: 30px; height: 18px; border: 1px solid #ddd; border-radius: 3px; }
.updown svg { width: 20px; height: 12px; }
.lib-body { flex: 1; display: flex; min-height: 0; margin-top: 13px; }
.lib-list { flex: 1; overflow: hidden; }
.cat { display: flex; align-items: center; height: 52px; background: #dfdfdf; color: #000; padding: 0 9px 0 16px; }
.cat span { flex: 1; padding-left: 9px; }
.cat button { color: #777; }
.cat > svg { width: 12px; height: 10px; stroke: none; }
.shapes { display: grid; grid-template-columns: repeat(4, 73px); padding: 5px 0 0 1px; }
.shapes svg { width: 73px; height: 73px; fill: #fff; stroke: #8c8c8c; stroke-width: 1; }
.shapes .dk { stroke: #555; }
.shapes .in { fill: #f4f4f4; }

.vbar i { display: block; border-radius: 5px; background: #bdbdbd; }
.center > .vbar { grid-area: 2 / 3 / 4 / 4; border-left: 1px solid #d8d8d8; border-top: 1px solid #d8d8d8; padding: 99px 1px 0; }
.center > .vbar i { width: 10px; height: 350px; }
.vbar.lite { width: 8px; background: #ececec; }
.vbar.lite i { width: 8px; height: 164px; background: #d2d2d2; }

.center { display: grid; grid-template-columns: 27px minmax(0, 1fr) 13px; grid-template-rows: 36px 26px minmax(0, 1fr) 13px 24px; min-height: 0; }
.tabs { grid-column: 1 / 4; }
.tab { width: 240px; height: 36px; background: #c3c3c3; display: flex; align-items: center; padding: 0 25px 0 16px; color: #777; }
.tab svg { stroke: #777; }
.tab .i24 { stroke: none; }
.tab a { flex: 1; color: #0080ff; text-decoration: none; padding-left: 11px; }
.corner { background: #efefef; border: solid #d8d8d8; border-width: 1px 1px 0 0; }
.hruler, .vruler { background: #fafafa; width: 100%; height: 100%; font-size: 14px; font-weight: 400; }
.hruler { border: solid #d8d8d8; border-width: 1px 0; }
.vruler { border-right: 1px solid #d8d8d8; }
.hruler text, .vruler text { fill: #777; }
.canvas { background: #e4e4e4; overflow: hidden; min-width: 0; }
.hbar { grid-column: 1 / 4; border: solid #d8d8d8; border-width: 1px 0; margin-right: 13px; padding-top: 1px; }
.hbar i { display: block; width: 532px; height: 9px; border-radius: 5px; background: #bdbdbd; margin-left: 242px; }
.palette { grid-column: 1 / 4; display: flex; align-items: center; padding-bottom: 2px; }
.palette button { margin: 2px 13px 0 12px; width: 22px; height: 22px; flex: none; color: #444; }
.sw { flex: 1; display: flex; gap: 1px; height: 21px; padding-right: 1px; }
.sw i { flex: 1; }

.page text { fill: #444; font-weight: 400; }
.page .s, .page .b { font-family: "Liberation Sans", "Noto Sans CJK SC", sans-serif; }
.page .s { font-size: 12px; }
.page .b text { font-size: 14px; font-weight: 700; }
.page .n text { font-size: 22px; font-weight: 600; fill: #fff; text-anchor: middle; }
.page .t { font-size: 29px; font-weight: 600; font-style: italic; }

.side { border-left: 1px solid #d0d0d0; display: flex; flex-direction: column; gap: 15px; overflow: hidden; }
.side button { height: 51px; width: 100%; color: #444; }
.side button:first-child { height: 47px; margin-bottom: -15px; }
.side svg { width: 30px; height: 30px; stroke: #444; stroke-width: 2.4; }
.side use { stroke: none; }
.side .on { background: #0080ff; }

/* Status bar */
.status { margin: 0 2px; background: #f4f4f4; border-top: 1px solid #d8d8d8; display: flex; align-items: center; color: #000; font-size: 19px; font-weight: 400; padding-left: 27px; }
.st svg { stroke: #444; stroke-width: 3; }
.pagesel { display: flex; align-items: center; margin-left: 36px; width: 159px; }
.pagesel select { flex: 1; min-width: 0; }
.pagesel .caret { width: 16px; height: 16px; }
.status .short { height: 36px; margin: 0 27px 0 0; }
.pg { font-weight: 700; font-size: 19px; }
.add { margin-left: 34px; }
.rt { margin-left: auto; display: flex; align-items: center; padding-right: 41px; }
.sid { white-space: pre; margin-right: 20px; font-size: 18px; font-weight: 300; }
.minus { margin: 0 8px 0 11px; }
.zoomsel { display: flex; align-items: center; margin: 0 22px 0 17px; gap: 9px; }
.zoomsel select { font-size: 19px; width: 40px; }
.full { margin-right: 7px; }

input[type="range"] {
  appearance: none;
  width: 121px;
  height: 20px;
  margin-right: 6px;
}
input[type="range"]::-webkit-slider-runnable-track {
  height: 6px;
  border-radius: 3px;
  background: linear-gradient(to right, #bdbdbd 18%, #dedede 18%);
}
input[type="range"]::-webkit-slider-thumb {
  appearance: none;
  width: 18px;
  height: 18px;
  margin-top: -6px;
  border: 3px solid #b8b8b8;
  border-radius: 50%;
  background: #fff;
}
```
